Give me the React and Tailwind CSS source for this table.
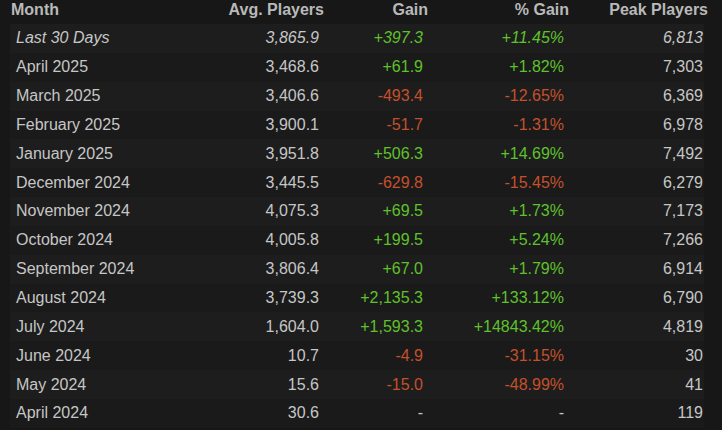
import React from 'react';

const rows = [
  { month: 'Last 30 Days', avg: '3,865.9', gain: '+397.3', pct: '+11.45%', peak: '6,813', italic: true },
  { month: 'April 2025', avg: '3,468.6', gain: '+61.9', pct: '+1.82%', peak: '7,303' },
  { month: 'March 2025', avg: '3,406.6', gain: '-493.4', pct: '-12.65%', peak: '6,369' },
  { month: 'February 2025', avg: '3,900.1', gain: '-51.7', pct: '-1.31%', peak: '6,978' },
  { month: 'January 2025', avg: '3,951.8', gain: '+506.3', pct: '+14.69%', peak: '7,492' },
  { month: 'December 2024', avg: '3,445.5', gain: '-629.8', pct: '-15.45%', peak: '6,279' },
  { month: 'November 2024', avg: '4,075.3', gain: '+69.5', pct: '+1.73%', peak: '7,173' },
  { month: 'October 2024', avg: '4,005.8', gain: '+199.5', pct: '+5.24%', peak: '7,266' },
  { month: 'September 2024', avg: '3,806.4', gain: '+67.0', pct: '+1.79%', peak: '6,914' },
  { month: 'August 2024', avg: '3,739.3', gain: '+2,135.3', pct: '+133.12%', peak: '6,790' },
  { month: 'July 2024', avg: '1,604.0', gain: '+1,593.3', pct: '+14843.42%', peak: '4,819' },
  { month: 'June 2024', avg: '10.7', gain: '-4.9', pct: '-31.15%', peak: '30' },
  { month: 'May 2024', avg: '15.6', gain: '-15.0', pct: '-48.99%', peak: '41' },
  { month: 'April 2024', avg: '30.6', gain: '-', pct: '-', peak: '119' },
];

const tone = (v) => {
  if (v.startsWith('+')) return 'text-[#5fc12c]';
  if (v.startsWith('-') && v.length > 1) return 'text-[#c4502c]';
  return 'text-[#c6c6c6]';
};

export default function App() {
  return (
    <div
      className="w-[722px] h-[430px] overflow-hidden bg-[#171717] text-[16px]"
      style={{ fontFamily: '"Liberation Sans", Arial, sans-serif' }}
    >
      <div className="pl-[10px]">
        <div className="grid grid-cols-[210px_104px_104px_141px_139px] h-[24px] leading-[20px] font-bold text-[#b9b9b9]">
          <div className="pl-[1px]">Month</div>
          <div className="text-right">Avg. Players</div>
          <div className="text-right">Gain</div>
          <div className="text-right">% Gain</div>
          <div className="text-right">Peak Players</div>
        </div>

        {rows.map((r, i) => (
          <div
            key={r.month}
            className={`grid grid-cols-[210px_100px_104px_141px_139px] w-[694px] h-[28.85px] items-center text-[#c6c6c6] ${
              i % 2 === 0 ? 'bg-[#1d1d1d]' : 'bg-[#1a1a1a]'
            } ${r.italic ? 'italic' : ''}`}
          >
            <div className="pl-[6px]">{r.month}</div>
            <div className="text-right pr-[1px]">{r.avg}</div>
            <div className={`text-right pr-[1px] ${tone(r.gain)}`}>{r.gain}</div>
            <div className={`text-right pr-[1px] ${tone(r.pct)}`}>{r.pct}</div>
            <div className="text-right pr-[1px]">{r.peak}</div>
          </div>
        ))}
      </div>
    </div>
  );
}
